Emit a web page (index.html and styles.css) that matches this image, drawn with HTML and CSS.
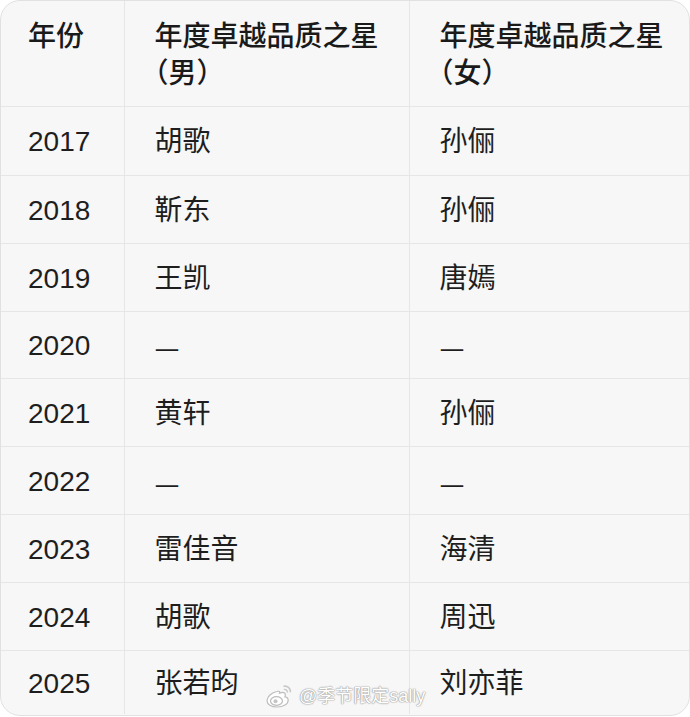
FILE: index.html
```html
<!DOCTYPE html>
<html lang="zh-CN">
<head>
<meta charset="utf-8">
<title>年度卓越品质之星</title>
<link rel="stylesheet" href="styles.css">
</head>
<body>
<div class="card">
  <table class="awards">
    <colgroup>
      <col class="c-year">
      <col class="c-male">
      <col class="c-female">
    </colgroup>
    <thead>
      <tr>
        <th>年份</th>
        <th>年度卓越品质之星<br><span class="paren">（男）</span></th>
        <th>年度卓越品质之星<br><span class="paren">（女）</span></th>
      </tr>
    </thead>
    <tbody>
      <tr><td>2017</td><td>胡歌</td><td>孙俪</td></tr>
      <tr><td>2018</td><td>靳东</td><td>孙俪</td></tr>
      <tr><td>2019</td><td>王凯</td><td>唐嫣</td></tr>
      <tr class="short"><td>2020</td><td class="dash">—</td><td class="dash">—</td></tr>
      <tr><td>2021</td><td>黄轩</td><td>孙俪</td></tr>
      <tr><td>2022</td><td class="dash">—</td><td class="dash">—</td></tr>
      <tr><td>2023</td><td>雷佳音</td><td>海清</td></tr>
      <tr><td>2024</td><td>胡歌</td><td>周迅</td></tr>
      <tr class="last"><td>2025</td><td>张若昀</td><td>刘亦菲</td></tr>
    </tbody>
  </table>
  <div class="watermark">
    <svg class="wb-logo" width="30" height="26" viewBox="0 0 30 26" aria-hidden="true">
      <path d="M12 8.5c-5.5 1-10 5.2-10 9.2 0 3.6 4.4 6.3 10 6.3 6.3 0 11.2-3 11.2-6.8 0-2.2-2-3.2-3.3-3.4 0.8-1.6 0.6-3.6-1.2-4.2-1.8-0.5-3.6 0.4-4.2 0.6 0.5-1.5 0.2-2.4-2.5-1.7z" fill="#fff" stroke="#bdbdbd" stroke-width="1.2"/>
      <ellipse cx="11.5" cy="18" rx="6" ry="4.3" fill="#fff" stroke="#bdbdbd" stroke-width="1.2"/>
      <circle cx="10.5" cy="18.3" r="2" fill="#c4c4c4"/>
      <path d="M19 3.2c3.2-0.6 6.6 2 6.4 5.6" fill="none" stroke="#c8c8c8" stroke-width="1.6" stroke-linecap="round"/>
      <path d="M19.4 6.4c1.6-0.2 3 1 2.9 2.6" fill="none" stroke="#c8c8c8" stroke-width="1.4" stroke-linecap="round"/>
    </svg>
    <span class="wb-name">@季节限定sally</span>
  </div>
</div>
</body>
</html>
```

FILE: styles.css
```css
html, body {
  margin: 0;
  padding: 0;
  background: #ffffff;
}

body {
  width: 690px;
  height: 717px;
  overflow: hidden;
  font-family: "Liberation Sans", "Noto Sans CJK SC", sans-serif;
  color: #1e1e1e;
}

.card {
  position: relative;
  box-sizing: border-box;
  width: 690px;
  height: 716px;
  border: 1px solid #e1e1e1;
  border-radius: 20px;
  background: #f7f7f7;
  overflow: hidden;
}

.awards {
  width: 100%;
  border-collapse: collapse;
  table-layout: fixed;
  font-size: 28px;
}

.c-year { width: 123px; }
.c-male { width: 285px; }
.c-female { width: auto; }

.awards th,
.awards td {
  text-align: left;
  padding: 0 0 0 30px;
  border-right: 1px solid #e6e6e6;
  border-bottom: 1px solid #e6e6e6;
}

.awards th:first-child,
.awards td:first-child {
  padding-left: 27px;
}

.awards th:last-child,
.awards td:last-child {
  border-right: none;
}

.awards th {
  height: 105px;
  vertical-align: top;
  padding-top: 17px;
  box-sizing: border-box;
  line-height: 37px;
  font-weight: 500;
  color: #1a1a1a;
}

.awards td {
  height: 68px;
  box-sizing: border-box;
  vertical-align: middle;
  line-height: 36px;
  font-weight: 400;
  padding-top: 3px;
}

.awards tbody tr:first-child td {
  height: 69px;
}

.awards tr.short td {
  height: 67px;
}

.awards tr.last td {
  border-bottom: none;
  height: 64px;
}

.paren {
  font-feature-settings: "halt";
}

.dash {
  font-family: "Noto Sans CJK SC", sans-serif;
  font-weight: 500;
}

.watermark {
  position: absolute;
  left: 264px;
  top: 682px;
  display: flex;
  align-items: center;
  gap: 4px;
}

.wb-logo {
  display: block;
}

.wb-name {
  font-family: "Liberation Sans", "Noto Sans CJK SC", sans-serif;
  font-size: 18px;
  line-height: 26px;
  color: #ffffff;
  text-shadow: 0 0 1px #9a9a9a, 0 0 1px #9a9a9a, 0 0 2px #b0b0b0;
}
```
